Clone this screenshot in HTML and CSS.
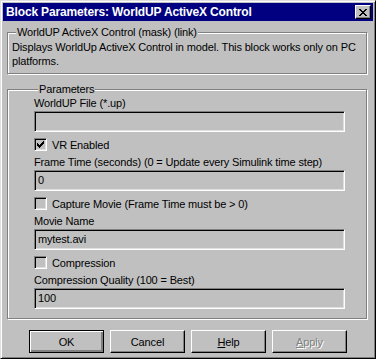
FILE: index.html
```html
<!DOCTYPE html>
<html lang="en">
<head>
  <meta charset="UTF-8">
  <title>Block Parameters: WorldUP ActiveX Control</title>
  <link rel="stylesheet" href="styles.css">
</head>
<body>
  <div class="window">
    <div class="titlebar">
      <span class="title">Block Parameters: WorldUP ActiveX Control</span>
      <button class="close-btn" aria-label="Close">
        <svg width="8" height="7" viewBox="0 0 8 7">
          <path d="M0 0h2v1h1v1h2v-1h1v-1h2v1h-1v1h-1v1h-1v1h1v1h1v1h1v1h-2v-1h-1v-1h-2v1h-1v1h-2v-1h1v-1h1v-1h1v-1h-1v-1h-1v-1h-1z" fill="#000"/>
        </svg>
      </button>
    </div>

    <fieldset class="group desc-group">
      <legend>WorldUP ActiveX Control (mask) (link)</legend>
      <p class="desc">Displays WorldUp ActiveX Control in model. This block works only on PC platforms.</p>
    </fieldset>

    <fieldset class="group params">
      <legend>Parameters</legend>

      <label class="field-label">WorldUP File (*.up)</label>
      <div class="edit"></div>

      <div class="check-row">
        <span class="checkbox checked">
          <svg width="7" height="7" viewBox="0 0 7 7"><path d="M6 0h1v3h-1v1h-1v1h-1v1h-1v1h-1v-1h-1v-1h-1v-3h1v1h1v1h1v-1h1v-1h1v-1h1z" fill="#000"/></svg>
        </span>
        <span>VR Enabled</span>
      </div>

      <label class="field-label">Frame Time (seconds) (0 = Update every Simulink time step)</label>
      <div class="edit">0</div>

      <div class="check-row">
        <span class="checkbox"></span>
        <span>Capture Movie (Frame Time must be &gt; 0)</span>
      </div>

      <label class="field-label">Movie Name</label>
      <div class="edit">mytest.avi</div>

      <div class="check-row">
        <span class="checkbox"></span>
        <span>Compression</span>
      </div>

      <label class="field-label">Compression Quality (100 = Best)</label>
      <div class="edit">100</div>
    </fieldset>

    <div class="buttons">
      <button class="btn default">OK</button>
      <button class="btn">Cancel</button>
      <button class="btn"><u>H</u>elp</button>
      <button class="btn disabled"><u>A</u>pply</button>
    </div>
  </div>
</body>
</html>
```

FILE: styles.css
```css
body {
  margin: 0;
  background: #c0c0c0;
  font-family: "Liberation Sans", Arial, sans-serif;
  font-size: 11px;
  letter-spacing: -0.15px;
  color: #000;
}

.window {
  box-sizing: border-box;
  width: 376px;
  height: 359px;
  padding: 2px;
  background: #c0c0c0;
  border: 1px solid;
  border-color: #dfdfdf #000 #000 #dfdfdf;
  box-shadow: inset 1px 1px 0 #fff, inset -1px -1px 0 #808080;
}

.titlebar {
  height: 18px;
  display: flex;
  align-items: center;
  justify-content: space-between;
  padding: 0 2px 0 3px;
  background: #000080;
  color: #fff;
}

.title {
  font-weight: bold;
  font-size: 12px;
}

.close-btn {
  box-sizing: border-box;
  width: 16px;
  height: 14px;
  padding: 0;
  display: flex;
  align-items: center;
  justify-content: center;
  background: #c0c0c0;
  border: 1px solid;
  border-color: #fff #000 #000 #fff;
  box-shadow: inset -1px -1px 0 #808080;
}

.group {
  margin: 5px 6px 0 4px;
  padding: 0 4px;
  border: 1px solid #808080;
  box-shadow: inset 1px 1px 0 #fff, 1px 1px 0 #fff;
}

.group legend {
  padding: 0 1px;
  margin-left: 4px;
  background: #c0c0c0;
  line-height: 13px;
}

.desc-group {
  box-sizing: border-box;
  height: 48px;
}

.desc {
  margin: 1px 0 0 0;
  line-height: 14px;
}

.params {
  margin-top: 9px;
  padding: 0 21px 9px 26px;
}

.field-label {
  display: block;
  line-height: 13px;
  margin-top: 1px;
}

.edit {
  box-sizing: border-box;
  height: 21px;
  margin-top: 1px;
  padding: 3px 0 0 3px;
  line-height: 13px;
  background: #c0c0c0;
  border: 1px solid;
  border-color: #808080 #fff #fff #808080;
  box-shadow: inset 1px 1px 0 #000, inset -1px -1px 0 #dfdfdf;
}

.check-row {
  display: flex;
  align-items: center;
  gap: 5px;
  height: 13px;
  margin: 6px 0 5px 0;
}

.checkbox {
  box-sizing: border-box;
  width: 13px;
  height: 13px;
  display: flex;
  align-items: center;
  justify-content: center;
  background: #c0c0c0;
  border: 1px solid;
  border-color: #808080 #fff #fff #808080;
  box-shadow: inset 1px 1px 0 #000, inset -1px -1px 0 #dfdfdf;
}

.buttons {
  display: flex;
  gap: 6px;
  margin: 11px 0 0 26px;
}

.btn {
  box-sizing: border-box;
  width: 75px;
  height: 23px;
  padding: 0;
  font: inherit;
  letter-spacing: inherit;
  color: #000;
  background: #c0c0c0;
  border: 1px solid;
  border-color: #fff #000 #000 #fff;
  box-shadow: inset -1px -1px 0 #808080;
}

.btn.default {
  border: 1px solid #000;
  box-shadow: inset 1px 1px 0 #fff, inset -2px -2px 0 #808080;
}

.btn.disabled {
  color: #808080;
  text-shadow: 1px 1px 0 #fff;
}
```
